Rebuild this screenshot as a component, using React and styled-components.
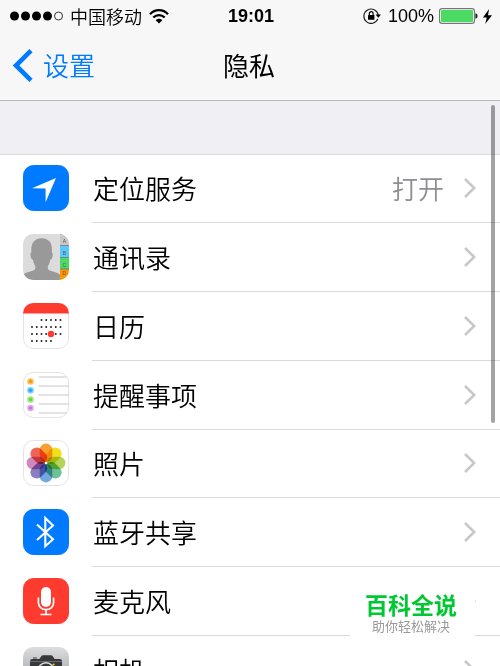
import React from "react";
import styled, { createGlobalStyle } from "styled-components";

const GlobalStyle = createGlobalStyle`
  * { box-sizing: border-box; }
  body {
    margin: 0;
    background: #fff;
    color: #000;
    font-family: "Liberation Sans", "Noto Sans CJK SC", sans-serif;
  }
`;

const Screen = styled.div`
  position: relative;
  height: 100vh;
  overflow: hidden;
  background: #fff;
`;

const Header = styled.header`
  background: #f7f7f7;
  border-bottom: 1px solid #b9b9bc;
`;

const StatusBar = styled.div`
  display: grid;
  grid-template-columns: 1fr auto 1fr;
  align-items: center;
  height: 32px;
  padding: 0 8px 0 10px;
  font-size: 18px;
  line-height: 32px;
  white-space: nowrap;
`;

const StatusGroup = styled.div`
  display: flex;
  align-items: center;
  gap: 7px;
  justify-content: ${(p) => (p.$end ? "flex-end" : "flex-start")};
`;

const PowerGroup = styled.div`
  display: flex;
  align-items: center;
  gap: 5px;
`;

const Carrier = styled.span`
  font-family: "Noto Sans CJK SC", sans-serif;
  font-weight: 350;
`;

const Clock = styled.time`
  font-weight: 700;
`;

const NavBar = styled.nav`
  display: grid;
  grid-template-columns: 1fr auto 1fr;
  align-items: center;
  height: 68px;
  padding: 0 14px 2px 12px;
  font-family: "Noto Sans CJK SC", sans-serif;
`;

const BackButton = styled.button`
  display: flex;
  align-items: center;
  justify-self: start;
  gap: 10px;
  padding: 0;
  border: 0;
  background: none;
  color: #007aff;
  font: 350 26px/40px "Noto Sans CJK SC", sans-serif;
  cursor: pointer;
`;

const Title = styled.h1`
  margin: 0;
  font-size: 26px;
  line-height: 40px;
  font-weight: 400;
`;

const SectionGap = styled.div`
  height: 54px;
  background: #efeff4;
  border-bottom: 1px solid #dcdce0;
`;

const List = styled.ul`
  margin: 0;
  padding: 0;
  list-style: none;
`;

const Item = styled.li`
  height: 69px;

  &:nth-child(4n + 1) {
    height: 68px;
  }
`;

const RowLink = styled.a`
  display: flex;
  gap: 23px;
  height: 100%;
  padding-left: 23px;
  color: #000;
  text-decoration: none;
`;

const IconBox = styled.span`
  display: flex;
  align-items: center;
  flex: none;
  padding-bottom: 2px;

  svg {
    display: block;
  }
`;

const RowBody = styled.span`
  display: flex;
  flex: 1;
  align-items: center;
  gap: 20px;
  padding: 0 24px 1px 1px;
  border-bottom: 1px solid #d9d9db;
  font: 350 26px/40px "Noto Sans CJK SC", sans-serif;
`;

const Label = styled.span`
  flex: 1;
`;

const Value = styled.span`
  color: #8e8e93;
`;

const ScrollThumb = styled.div`
  position: absolute;
  top: 105px;
  right: 5px;
  width: 4px;
  height: 318px;
  border-radius: 2px;
  background: rgba(0, 0, 0, 0.36);
`;

const Badge = styled.aside`
  position: absolute;
  right: 25px;
  bottom: 22px;
  width: 125px;
  padding: 4px 3px 8px 0;
  background: #fff;
  text-align: center;
  font-family: "Noto Sans CJK SC", sans-serif;
`;

const BadgeName = styled.div`
  color: #00c832;
  font-size: 23px;
  line-height: 24px;
  font-weight: 700;
`;

const BadgeTagline = styled.div`
  color: #999;
  font-size: 13px;
  line-height: 20px;
`;

const Signal = () => (
  <svg width="53" height="10" viewBox="0 0 53 10" aria-label="信号">
    {[4.5, 15.5, 26.5, 37.5].map((x) => (
      <circle key={x} cx={x} cy="5" r="4.5" />
    ))}
    <circle cx="48.5" cy="5" r="4" fill="none" stroke="#333" />
  </svg>
);

const Wifi = () => (
  <svg width="20" height="15" viewBox="0 0 20 15" fill="none" stroke="#000" strokeWidth="2.2" aria-label="Wi-Fi">
    <path d="M1 5.3C6-.2 14-.2 19 5.3M4.3 8.6c3.2-3.3 8.2-3.3 11.4 0" />
    <path d="M6.7 11.2c1.8-2 4.8-2 6.6 0L10 14.5z" fill="#000" stroke="none" />
  </svg>
);

const RotationLock = () => (
  <svg width="18" height="16" viewBox="0 0 18 16" aria-label="方向锁定">
    <path d="M14.8 10.9A7.2 7.2 0 1 1 15.2 7" fill="none" stroke="#222" strokeWidth="1.2" />
    <path d="M12.6 6.6h5.4l-2.7 3.2z" />
    <rect x="5" y="7" width="6.4" height="4.8" rx=".4" />
    <path d="M6.3 7.4V5.6a1.9 1.9 0 0 1 3.8 0v1.8" fill="none" stroke="#000" strokeWidth="1.2" />
  </svg>
);

const Battery = () => (
  <svg width="39" height="16" viewBox="0 0 39 16" aria-label="电池">
    <rect x=".6" y=".6" width="34.8" height="14.8" rx="2.4" fill="#fff" stroke="#777" strokeWidth="1.2" />
    <rect x="2" y="2" width="32" height="12" rx="1" fill="#4cd964" />
    <path d="M36.4 5.2q2.2.3 2.2 2.8t-2.2 2.8z" fill="#222" />
  </svg>
);

const Bolt = () => (
  <svg width="9" height="15" viewBox="0 0 9 15" aria-label="充电中">
    <path d="M6.1 0 0 8.5h3.8L2.2 15 9 6.2H5z" />
  </svg>
);

const BackChevron = () => (
  <svg width="21" height="33" viewBox="0 0 21 33" fill="none" stroke="#007aff" strokeWidth="4.6" aria-hidden="true">
    <path d="M19 1.7 4 16.5l15 14.8" />
  </svg>
);

const Chevron = () => (
  <svg width="12" height="20" viewBox="0 0 12 20" fill="none" stroke="#c7c7cc" strokeWidth="2.6" aria-hidden="true">
    <path d="m1 1 9.2 9L1 19" />
  </svg>
);

const Tile = ({ fill, outlined, children }) => (
  <svg width="46" height="46" viewBox="0 0 46 46" aria-hidden="true">
    <rect
      x=".5" y=".5" width="45" height="45" rx="10"
      fill={fill} stroke={outlined ? "#e3e3e5" : fill}
    />
    {children}
  </svg>
);

const LocationIcon = () => (
  <Tile fill="#007aff">
    <path d="M33 13 22.6 37.2V23.5L9 23.3z" fill="#fff" />
  </Tile>
);

const tabs = [
  { y: 0, h: 11.5, fill: "#c9c8c3", letter: "A" },
  { y: 11.5, h: 12, fill: "#5ac8fa", letter: "B" },
  { y: 23.5, h: 11.5, fill: "#4cd964", letter: "C" },
  { y: 35, h: 11, fill: "#ff9500", letter: "D" },
];

const ContactsIcon = () => (
  <svg width="46" height="46" viewBox="0 0 46 46" aria-hidden="true">
    <clipPath id="contacts-tile"><rect width="46" height="46" rx="10" /></clipPath>
    <g clipPath="url(#contacts-tile)">
      <rect width="46" height="46" fill="#dcdcdc" />
      <path d="M0 46v-5c2-2.2 5.5-3.2 9-4 2.600-.6 3.600-1.600 3.400-4.600-1-1.800-2-4-2.400-6.400-1.600-.6-2.300-2.400-2.500-4.400-.1-1.300 0-2.600.9-3C7.600 10 10.600 4.500 18.600 4.300c8.400.2 11 5.700 10.200 14.300.9.4 1 1.700.9 3-.2 2-.9 3.800-2.500 4.400-.4 2.400-1.400 4.600-2.400 6.400-.2 3 .8 4 3.400 4.600 3.500.8 7 1.800 9 4v5z" fill="#999" />
      {tabs.map((t) => (
        <g key={t.letter}>
          <rect x="37" y={t.y} width="9" height={t.h} fill={t.fill} />
          <path d={`M37 ${t.y}h9`} stroke="#777" strokeWidth=".8" />
          <text x="41.3" y={t.letter === "D" ? 41 : t.y + 9} fontSize="5" textAnchor="middle" fill="#555">{t.letter}</text>
        </g>
      ))}
    </g>
  </svg>
);

const calendarRows = [
  { y: 17, from: 2, to: 6 },
  { y: 24, from: 0, to: 6 },
  { y: 31, from: 0, to: 6 },
  { y: 38, from: 0, to: 4 },
];

const CalendarIcon = () => (
  <Tile fill="#fff" outlined>
    <path d="M0 10.5A10.5 10.5 0 0 1 10.5 0h25A10.5 10.5 0 0 1 46 10.5z" fill="#ff3b30" />
    {calendarRows.flatMap((r) =>
      Array.from({ length: r.to - r.from + 1 }, (_, i) => (
        <rect key={`${r.y}-${i}`} x={8.2 + (r.from + i) * 4.75} y={r.y - 0.8} width="1.6" height="1.6" />
      ))
    )}
    <circle cx="28" cy="31" r="3.2" fill="#ff3b30" />
  </Tile>
);

const reminders = [
  { y: 9.5, fill: "#ff9500" },
  { y: 18.3, fill: "#1badf8" },
  { y: 27.5, fill: "#63da38" },
  { y: 36, fill: "#cc73e1" },
];

const RemindersIcon = () => (
  <Tile fill="#fff" outlined>
    <path d="M15.5 5h28M15.5 14H46M15.5 23H46M15.5 32H46M15.5 41h28" stroke="#c8c8c8" />
    {reminders.map((r) => (
      <g key={r.y} fill={r.fill}>
        <circle cx="7.5" cy={r.y} r="3.3" opacity=".6" />
        <circle cx="7.5" cy={r.y} r="1.7" />
      </g>
    ))}
  </Tile>
);

const petals = ["#f9a130", "#f3df1d", "#b4d557", "#6dc19b", "#71a9df", "#8b7fc0", "#cf89bc", "#f06456"];

const Petal = styled.rect`
  mix-blend-mode: multiply;
`;

const PhotosIcon = () => (
  <Tile fill="#fff" outlined>
    {petals.map((fill, i) => (
      <Petal
        key={fill} x="16.7" y="3.6" width="12.6" height="18.4" rx="6.2"
        fill={fill} transform={`rotate(${i * 45} 23 23)`}
      />
    ))}
    <circle cx="23" cy="23" r="1" fill="#fff" />
  </Tile>
);

const BluetoothIcon = () => (
  <Tile fill="#007aff">
    <path d="m14 15.500 16 14.700-7.700 7V9l7.700 7.500L14 31" fill="none" stroke="#fff" strokeWidth="2.1" />
  </Tile>
);

const MicIcon = () => (
  <Tile fill="#ff3b30">
    <rect x="18" y="9" width="10" height="20" rx="5" fill="#fff" />
    <path d="M15.4 19.5v5c0 9.6 15.2 9.6 15.2 0v-5M23 32v4M17.5 36.5h11" fill="none" stroke="#fff" strokeWidth="1.7" />
  </Tile>
);

const CameraIcon = () => (
  <svg width="46" height="46" viewBox="0 0 46 46" aria-hidden="true">
    <linearGradient id="camera-tile" x2="0" y2="1">
      <stop stopColor="#dddee0" />
      <stop offset="1" stopColor="#8d8e92" />
    </linearGradient>
    <rect width="46" height="46" rx="10" fill="url(#camera-tile)" />
    <path d="M7 14q0-2 2.500-2h6.800l2.400-3.200q.4-.6 1.300-.6h8q.9 0 1.300.6l2.400 3.200h4.800q2.500 0 2.500 2v20q0 3-3 3H10q-3 0-3-3zM10 10.400h3.800v1.200H10z" fill="#38393b" />
    <path d="M7 14.500h32" stroke="#77787a" strokeWidth=".8" />
    <circle cx="23" cy="24" r="8.2" fill="#38393b" stroke="#e0e0e0" strokeWidth="1.6" />
    <circle cx="30.7" cy="17.4" r="1" fill="#ffcc00" />
  </svg>
);

const rows = [
  { label: "定位服务", value: "打开", Icon: LocationIcon },
  { label: "通讯录", Icon: ContactsIcon },
  { label: "日历", Icon: CalendarIcon },
  { label: "提醒事项", Icon: RemindersIcon },
  { label: "照片", Icon: PhotosIcon },
  { label: "蓝牙共享", Icon: BluetoothIcon },
  { label: "麦克风", Icon: MicIcon },
  { label: "相机", Icon: CameraIcon },
];

export default function App() {
  return (
    <Screen lang="zh-CN">
      <GlobalStyle />
      <Header>
        <StatusBar>
          <StatusGroup>
            <Signal />
            <Carrier>中国移动</Carrier>
            <Wifi />
          </StatusGroup>
          <Clock>19:01</Clock>
          <StatusGroup $end>
            <RotationLock />
            <PowerGroup>
              <span>100%</span>
              <Battery />
              <Bolt />
            </PowerGroup>
          </StatusGroup>
        </StatusBar>
        <NavBar>
          <BackButton type="button">
            <BackChevron />
            设置
          </BackButton>
          <Title>隐私</Title>
        </NavBar>
      </Header>
      <main>
        <SectionGap />
        <List>
          {rows.map(({ label, value, Icon }) => (
            <Item key={label}>
              <RowLink href="#">
                <IconBox><Icon /></IconBox>
                <RowBody>
                  <Label>{label}</Label>
                  {value && <Value>{value}</Value>}
                  <Chevron />
                </RowBody>
              </RowLink>
            </Item>
          ))}
        </List>
      </main>
      <ScrollThumb />
      <Badge>
        <BadgeName>百科全说</BadgeName>
        <BadgeTagline>助你轻松解决</BadgeTagline>
      </Badge>
    </Screen>
  );
}
